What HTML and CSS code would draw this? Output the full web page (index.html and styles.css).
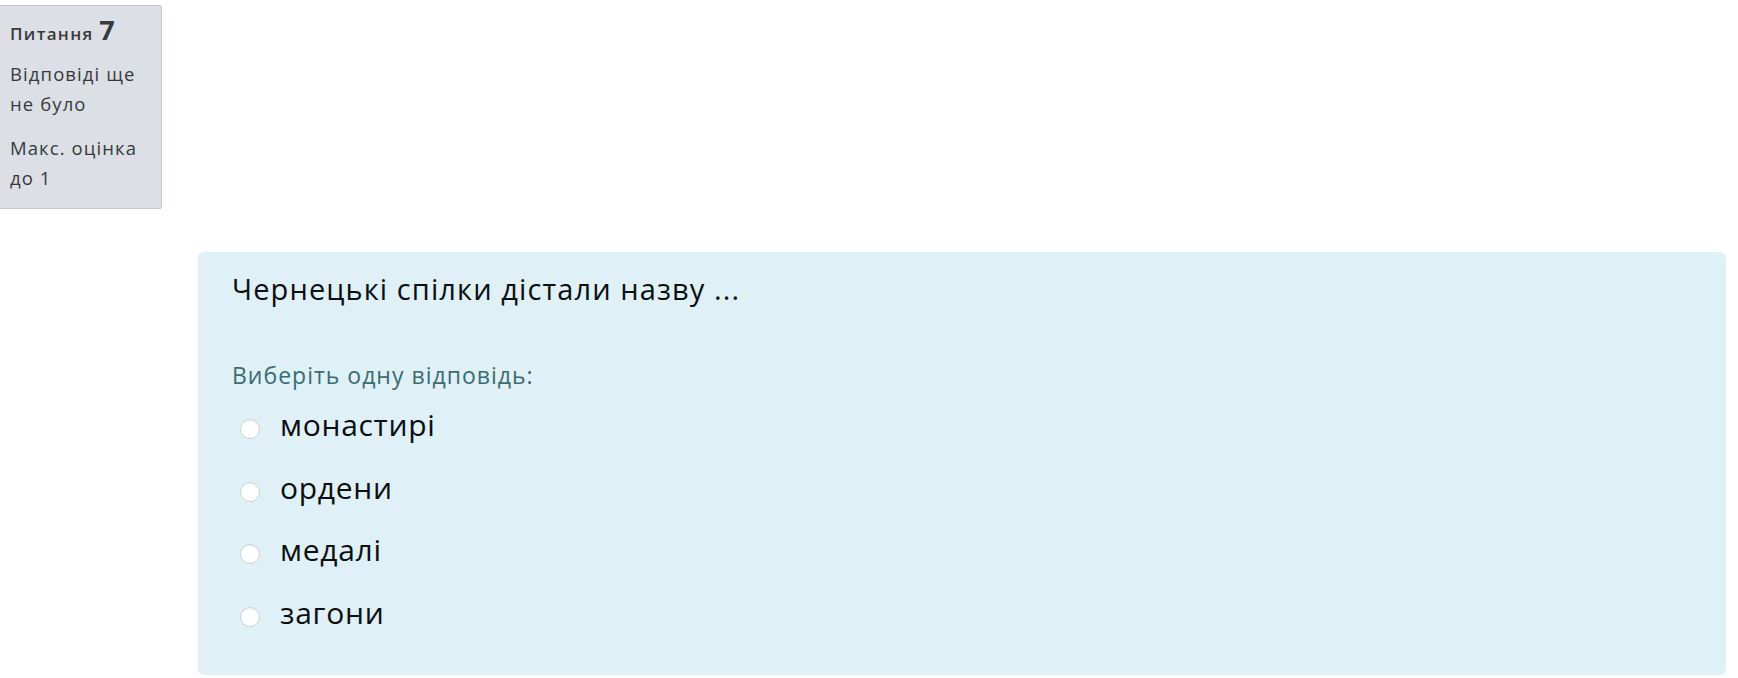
FILE: index.html
```html
<!DOCTYPE html>
<html lang="uk">

<head>
    <meta charset="UTF-8">
    <meta name="viewport" content="width=device-width, initial-scale=1.0">
    <title>Питання 7</title>

    <link rel="stylesheet" href="styles.css">
</head>

<body>
    <div class="que">
        <div class="info">
            <h3 class="no">Питання <span class="qno">7</span></h3>
            <div class="state">Відповіді ще не було</div>
            <div class="grade">Макс. оцінка до 1</div>
        </div>

        <div class="content">
            <div class="formulation">
                <div class="qtext">Чернецькі спілки дістали назву ...</div>

                <div class="ablock">
                    <div class="prompt">Виберіть одну відповідь:</div>
                    <div class="answer">
                        <label class="r0">
                            <input type="radio" name="q7answer" value="0">
                            <span>монастирі</span>
                        </label>
                        <label class="r1">
                            <input type="radio" name="q7answer" value="1">
                            <span>ордени</span>
                        </label>
                        <label class="r0">
                            <input type="radio" name="q7answer" value="2">
                            <span>медалі</span>
                        </label>
                        <label class="r1">
                            <input type="radio" name="q7answer" value="3">
                            <span>загони</span>
                        </label>
                    </div>
                </div>
            </div>
        </div>
    </div>
</body>

</html>
```

FILE: styles.css
```css
body {
    margin: 0;
    background-color: #fff;
    font-family: "Open Sans", "Noto Sans", sans-serif;
    color: #1d2125;
}

.que {
    padding-top: 5px;
}

.info {
    width: 142px;
    margin-left: -1px;
    padding: 8px 9px 16px 10px;
    background-color: #dcdfe5;
    border: 1px solid #c3c8d0;
    border-radius: 2px;
    color: #373a3c;
}

.info .no {
    margin: 0 0 9px 0;
    font-size: 17px;
    font-weight: 600;
    line-height: 32px;
    letter-spacing: 1.3px;
}

.info .qno {
    font-size: 27px;
    font-weight: 700;
    letter-spacing: 0;
}

.info .state,
.info .grade {
    font-size: 18.5px;
    line-height: 29.5px;
    letter-spacing: 1.1px;
}

.info .grade {
    margin-top: 15px;
}

.content {
    margin: 43px 12px 0 198px;
}

.formulation {
    padding: 18px 34px 29px 34px;
    background-color: #dff0f6;
    border-radius: 6px;
    color: #0a0f12;
}

.qtext {
    font-size: 29px;
    line-height: 38px;
    letter-spacing: 1.1px;
}

.prompt {
    margin-top: 52px;
    font-size: 23px;
    line-height: 30px;
    letter-spacing: 1px;
    color: #3a6c74;
}

.answer {
    margin-top: 6px;
}

.answer label {
    display: flex;
    align-items: center;
    height: 62.5px;
}

.answer input {
    appearance: none;
    -webkit-appearance: none;
    width: 20px;
    height: 20px;
    margin: 4px 20px 0 8px;
    border: 1px solid #ccd2d6;
    border-radius: 50%;
    background-color: #fff;
    box-shadow: inset 0 1px 2px rgba(0, 0, 0, 0.06);
}

.answer span {
    font-size: 30px;
    line-height: 40px;
    letter-spacing: 0.7px;
    padding-bottom: 4px;
}
```
